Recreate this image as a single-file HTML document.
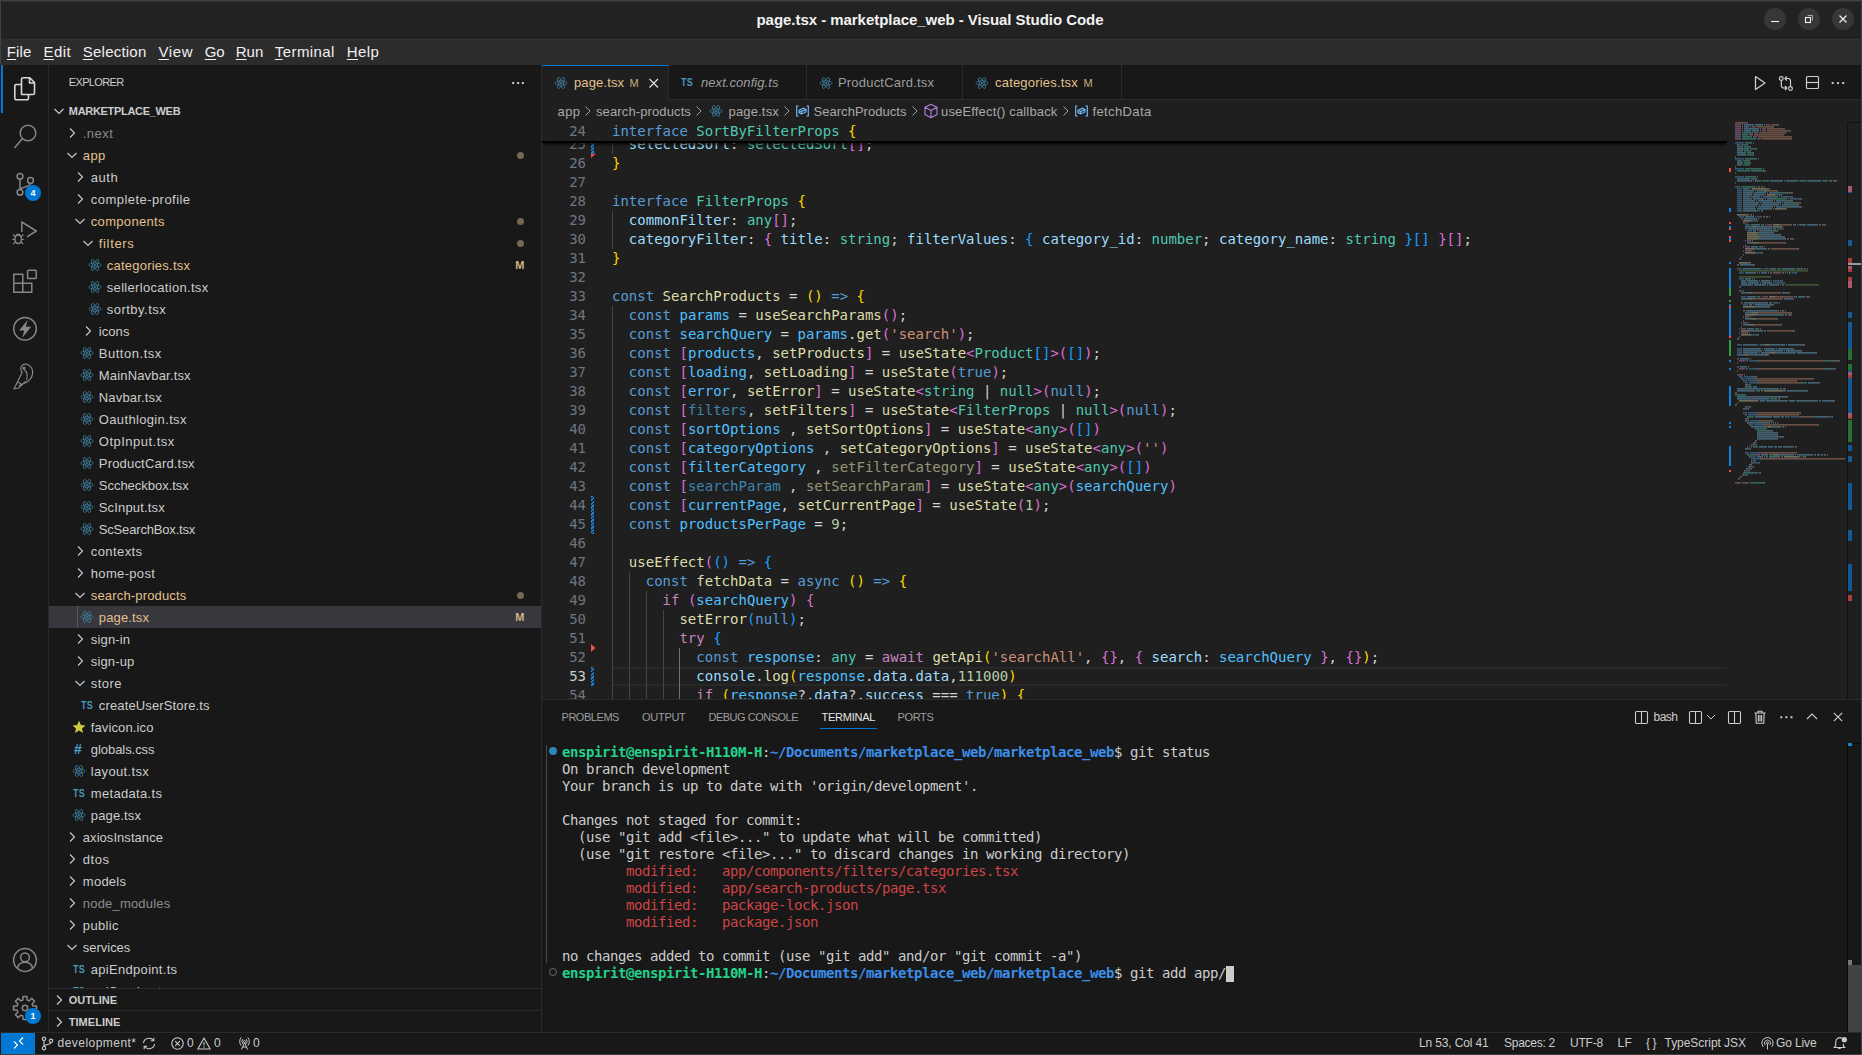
<!DOCTYPE html>
<html lang="en"><head><meta charset="utf-8"><title>page.tsx - marketplace_web - Visual Studio Code</title>
<style>
*{box-sizing:border-box;margin:0;padding:0}
html,body{width:1862px;height:1055px;overflow:hidden;background:#181818}
body{font-family:"Liberation Sans",sans-serif;color:#ccc;position:relative;font-size:13px;-webkit-font-smoothing:antialiased}
.abs{position:absolute}
#titlebar{left:0;top:0;width:1862px;height:38px;background:linear-gradient(#424242 0 1px,#2c2c2c 1px 2px,#222222 2px);border-bottom:1px solid #191919}
#title{top:10.5px;font-weight:bold;font-size:15px;color:#f2f2f2;line-height:17px;white-space:nowrap}
.wbtn{width:22px;height:22px;border-radius:11px;background:#373737;top:8px}
#menubar{left:0;top:38px;width:1862px;height:27px;background:#2c2c2c}
#menubar span{position:absolute;top:5px;font-size:15px;line-height:17px;color:#f0f0f0;white-space:nowrap;letter-spacing:.12px}
#menubar u{text-decoration-thickness:1px;text-underline-offset:2px}
#leftedge{left:0;top:0;width:1px;height:1055px;background:#424242}
#activity{left:0;top:65px;width:49px;height:967px;background:#181818;border-right:1px solid #2b2b2b}
#sidebar{left:49px;top:65px;width:493px;height:967px;background:#181818;border-right:1px solid #2b2b2b;overflow:hidden}
.row{position:absolute;left:0;width:492px;height:22px;line-height:22px;font-size:13px;color:#ccc;white-space:nowrap}
.row .t{position:absolute;top:1px;letter-spacing:.25px}
.row .ic{position:absolute;top:3px;width:16px;height:16px}
.row .chev{position:absolute;top:3px;width:16px;height:16px}
.row .badge{position:absolute;right:16.5px;top:0;font-size:11px;font-weight:bold;color:#d3b485;letter-spacing:.2px}
.row .dot{position:absolute;left:467.5px;top:7.5px;width:7px;height:7px;border-radius:4px;background:#776751}
.mod{color:#e2c08d}
.dim{color:#8c8c8c}
#editor{left:542px;top:65px;width:1320px;height:634px;background:#1f1f1f;overflow:hidden}
#tabs{left:0;top:0;width:1320px;height:35px;background:#181818;border-bottom:1px solid #2b2b2b}
.tab{position:absolute;top:0;height:35px;border-right:1px solid #2b2b2b;font-size:13px;line-height:35px;color:#9d9d9d;white-space:nowrap}
.tab.active{background:#1f1f1f;border-top:1px solid #0078d4;height:36px;color:#e2c08d}
.tab span{position:absolute;top:0}
#crumbs{left:0;top:35px;width:1320px;height:22px;font-size:13px;line-height:22px;color:#a9a9a9;white-space:nowrap}
#crumbs span{position:absolute;top:1px}
.code{font-family:"DejaVu Sans Mono",monospace;font-size:14px;line-height:19px;white-space:pre;color:#d4d4d4}
.ln{position:absolute;left:0;width:44px;text-align:right;color:#6e7681;height:19px}
.cl{position:absolute;left:70px;height:19px}
.k{color:#569cd6}.c{color:#c586c0}.ty{color:#4ec9b0}.v{color:#9cdcfe}.cn{color:#4fc1ff}.f{color:#dcdcaa}.s{color:#ce9178}.n{color:#b5cea8}
.b1{color:#ffd700}.b2{color:#da70d6}.b3{color:#179fff}
.u{opacity:.62}
.guide{position:absolute;width:1px;background:#404040}
#panel{left:542px;top:699px;width:1320px;height:333px;background:#181818;border-top:1px solid #2b2b2b}
.ptab{position:absolute;top:9px;font-size:11px;line-height:16px;color:#9d9d9d;white-space:nowrap}
.term{font-family:"DejaVu Sans Mono",monospace;font-size:14px;line-height:17px;white-space:pre;color:#cccccc;letter-spacing:-0.43px;position:absolute;left:20px;height:17px}
.tg{color:#23d18b;font-weight:bold}.tb{color:#3b8eea;font-weight:bold}.tr{color:#cd4545}
#status{left:0;top:1032px;width:1862px;height:23px;background:#181818;border-top:1px solid #2b2b2b;font-size:12px;line-height:22px;color:#ccc;white-space:nowrap}
#status span{position:absolute;top:-1px}
svg{display:block;overflow:visible}
</style></head><body>
<div class="abs" id="titlebar"></div>
<div class="abs" id="title" style="left:756.5px;letter-spacing:-0.043px">page.tsx - marketplace_web - Visual Studio Code</div>
<div class="abs wbtn" style="left:1764px"></div>
<div class="abs wbtn" style="left:1798px"></div>
<div class="abs wbtn" style="left:1832px"></div>
<svg class="abs" style="left:0;top:0" width="1862" height="38" viewBox="0 0 1862 38"><g fill="none" stroke="#f0f0f0" stroke-width="1.1"><path d="M1771 21.5 H1779"/><rect x="1805.5" y="17.5" width="5" height="5"/><path d="M1807.5 15.5 H1812.5 V20.5" stroke="#aaa" stroke-width="1"/><path d="M1839.5 15.5 L1846.5 22.5 M1846.5 15.5 L1839.5 22.5" stroke-width="1.2"/></g></svg>
<div class="abs" id="menubar">
<span style="left:6.8px;letter-spacing:0.132px"><u>F</u>ile</span>
<span style="left:43.5px;letter-spacing:0.46px"><u>E</u>dit</span>
<span style="left:82.8px;letter-spacing:0.22px"><u>S</u>election</span>
<span style="left:158.5px;letter-spacing:0.612px"><u>V</u>iew</span>
<span style="left:204.8px;letter-spacing:-0.308px"><u>G</u>o</span>
<span style="left:235.8px;letter-spacing:-0.044px"><u>R</u>un</span>
<span style="left:274.8px;letter-spacing:0.414px"><u>T</u>erminal</span>
<span style="left:346.8px;letter-spacing:0.385px"><u>H</u>elp</span>
</div>
<div class="abs" id="leftedge"></div>
<div class="abs" id="activity">
<div class="abs" style="left:1px;top:0;width:2px;height:48px;background:#0078d4"></div>
<svg class="abs" style="left:0;top:0" width="49" height="967" viewBox="0 65 49 967"><g fill="none" stroke="#d7d7d7" stroke-width="1.6" stroke-linejoin="round"><path d="M21.5 94.5 V79.3 a1.5 1.5 0 0 1 1.5 -1.5 H29.8 L34.5 82.5 V93 a1.5 1.5 0 0 1 -1.5 1.5 Z M29.5 78 V83 H34.5"/><path d="M21.5 84.5 H16.3 a1.5 1.5 0 0 0 -1.5 1.5 V98.3 a1.5 1.5 0 0 0 1.5 1.5 H27 a1.5 1.5 0 0 0 1.5 -1.5 V94.5"/></g></svg>
<svg class="abs" style="left:0;top:0" width="49" height="967" viewBox="0 65 49 967"><g fill="none" stroke="#868686" stroke-width="1.5" stroke-linejoin="round"><circle cx="28" cy="133" r="7.8"/><path d="M22.3 138.7 L14.5 148"/></g></svg>
<svg class="abs" style="left:0;top:0" width="49" height="967" viewBox="0 65 49 967"><g fill="none" stroke="#868686" stroke-width="1.5" stroke-linejoin="round"><circle cx="20" cy="176.3" r="2.9"/><circle cx="20" cy="192.3" r="2.9"/><circle cx="30.5" cy="180.5" r="2.9"/><path d="M20 179.2 V189.4 M30.5 183.4 C30.5 187 22 186.5 20 189.4"/></g></svg>
<div class="abs" style="left:25px;top:120px;width:16px;height:16px;border-radius:8px;background:#0078d4;color:#fff;font-size:9px;font-weight:bold;text-align:center;line-height:16px">4</div>
<svg class="abs" style="left:0;top:0" width="49" height="967" viewBox="0 65 49 967"><g fill="none" stroke="#868686" stroke-width="1.5" stroke-linejoin="round"><path d="M21.8 232 V222 L36.3 231 L27 236.8"/><ellipse cx="18.2" cy="239.2" rx="3.3" ry="4.2"/><path d="M15.2 236.5 L13 234.5 M21.2 236.5 L23.4 234.5 M14.9 239.5 H12.2 M21.5 239.5 H24.2 M15.4 242 L13.2 244 M21 242 L23.2 244 M16 235.8 A2.3 2.3 0 0 1 20.4 235.8" stroke-width="1.2"/></g></svg>
<svg class="abs" style="left:0;top:0" width="49" height="967" viewBox="0 65 49 967"><g fill="none" stroke="#868686" stroke-width="1.5" stroke-linejoin="round"><path d="M13.8 274.3 H22.8 V292.3 H13.8 Z M13.8 283.3 H31.8 V292.3 H22.8 M22.8 283.3"/><rect x="27.6" y="270.2" width="8.6" height="8.4" rx="0.8"/></g></svg>
<svg class="abs" style="left:0;top:0" width="49" height="967" viewBox="0 65 49 967"><g fill="none" stroke="#868686" stroke-width="1.5" stroke-linejoin="round"><circle cx="25" cy="328.8" r="11.3"/></g></svg>
<svg class="abs" style="left:0;top:0" width="49" height="967" viewBox="0 65 49 967"><path d="M27.8 319.8 L19 330.6 H24.2 L22.2 338 L31.2 326.8 H25.8 Z" fill="#868686"/></svg>
<svg class="abs" style="left:0;top:0" width="49" height="967" viewBox="0 65 49 967"><g fill="none" stroke="#868686" stroke-width="1.5" stroke-linejoin="round"><path d="M22 372.5 C18.5 366 24 362.5 28.5 365 C34.5 368.5 34.5 378.5 25 383 L19 385.5 M23.5 369 C26.5 371 28 375 26.5 380 M22.5 371.5 L14 389 L18.5 388 L25.5 381.5 M17.5 382 L22.5 384.5" stroke-width="1.2"/><circle cx="24" cy="368" r="0.8" fill="#868686"/></g></svg>
<svg class="abs" style="left:0;top:0" width="49" height="967" viewBox="0 65 49 967"><g fill="none" stroke="#868686" stroke-width="1.5" stroke-linejoin="round"><circle cx="25" cy="960" r="11.4"/><circle cx="25" cy="957.3" r="4.4"/><path d="M17.3 968.2 A8 8 0 0 1 32.7 968.2"/></g></svg>
<svg class="abs" style="left:0;top:0" width="49" height="967" viewBox="0 65 49 967"><g fill="none" stroke="#868686" stroke-width="1.5" stroke-linejoin="round"><path d="M22.9 1000.1 L23.0 996.5 L27.0 996.5 L27.1 1000.1 L29.1 1000.9 L31.8 998.4 L34.6 1001.2 L32.1 1003.9 L32.9 1005.9 L36.5 1006.0 L36.5 1010.0 L32.9 1010.1 L32.1 1012.1 L34.6 1014.8 L31.8 1017.6 L29.1 1015.1 L27.1 1015.9 L27.0 1019.5 L23.0 1019.5 L22.9 1015.9 L20.9 1015.1 L18.2 1017.6 L15.4 1014.8 L17.9 1012.1 L17.1 1010.1 L13.5 1010.0 L13.5 1006.0 L17.1 1005.9 L17.9 1003.9 L15.4 1001.2 L18.2 998.4 L20.9 1000.9 Z"/><circle cx="25" cy="1008" r="2.7"/></g></svg>
<div class="abs" style="left:25px;top:943px;width:16px;height:16px;border-radius:8px;background:#0078d4;color:#fff;font-size:9px;font-weight:bold;text-align:center;line-height:16px">1</div>
</div>
<div class="abs" id="sidebar">
<div class="abs" style="left:19.8px;top:9px;font-size:11px;line-height:16px;color:#ccc;letter-spacing:-0.653px">EXPLORER</div>
<div class="abs" style="left:462px;top:17px;width:14px;height:3px"><svg width="14" height="3" viewBox="0 0 14 3"><g fill="#d0d0d0"><rect x="1.1" y="0" width="2" height="2" rx=".5"/><rect x="6.1" y="0" width="2" height="2" rx=".5"/><rect x="10.9" y="0" width="2" height="2" rx=".5"/></g></svg></div>
<div class="row" style="top:35px"><svg class="chev" style="left:2px" viewBox="0 0 16 16"><path d="M3.5 6 L8 10.5 L12.5 6" fill="none" stroke="#c8c8c8" stroke-width="1.15"/></svg><span class="t" style="left:19.8px;top:0;font-size:11px;font-weight:bold;color:#ccc;letter-spacing:-0.308px">MARKETPLACE_WEB</span></div>
<div class="row" style="top:57px"><svg class="chev" style="left:15px" viewBox="0 0 16 16"><path d="M6 3.5 L10.5 8 L6 12.5" fill="none" stroke="#c8c8c8" stroke-width="1.15"/></svg><span class="t dim" style="left:33.8px;letter-spacing:0.443px">.next</span></div>
<div class="row" style="top:79px"><svg class="chev" style="left:15px" viewBox="0 0 16 16"><path d="M3.5 6 L8 10.5 L12.5 6" fill="none" stroke="#c8c8c8" stroke-width="1.15"/></svg><span class="t mod" style="left:33.8px;letter-spacing:0.432px">app</span><span class="dot"></span></div>
<div class="row" style="top:101px"><svg class="chev" style="left:23px" viewBox="0 0 16 16"><path d="M6 3.5 L10.5 8 L6 12.5" fill="none" stroke="#c8c8c8" stroke-width="1.15"/></svg><span class="t" style="left:41.8px;letter-spacing:0.522px">auth</span></div>
<div class="row" style="top:123px"><svg class="chev" style="left:23px" viewBox="0 0 16 16"><path d="M6 3.5 L10.5 8 L6 12.5" fill="none" stroke="#c8c8c8" stroke-width="1.15"/></svg><span class="t" style="left:41.8px;letter-spacing:0.45px">complete-profile</span></div>
<div class="row" style="top:145px"><svg class="chev" style="left:23px" viewBox="0 0 16 16"><path d="M3.5 6 L8 10.5 L12.5 6" fill="none" stroke="#c8c8c8" stroke-width="1.15"/></svg><span class="t mod" style="left:41.8px;letter-spacing:0.317px">components</span><span class="dot"></span></div>
<div class="row" style="top:167px"><svg class="chev" style="left:31px" viewBox="0 0 16 16"><path d="M3.5 6 L8 10.5 L12.5 6" fill="none" stroke="#c8c8c8" stroke-width="1.15"/></svg><span class="t mod" style="left:49.8px;letter-spacing:0.663px">filters</span><span class="dot"></span></div>
<div class="row" style="top:189px"><svg class="ic" style="left:37.5px;top:3.3px;width:16px;height:16px" viewBox="0 0 16 16"><g fill="none" stroke="#3c7c99" stroke-width="0.8"><ellipse cx="8" cy="8" rx="6.1" ry="2.2"/><ellipse cx="8" cy="8" rx="6.1" ry="2.2" transform="rotate(60 8 8)"/><ellipse cx="8" cy="8" rx="6.1" ry="2.2" transform="rotate(120 8 8)"/></g><circle cx="8" cy="8" r="1.1" fill="#3c7c99"/></svg><span class="t mod" style="left:57.8px;letter-spacing:0.228px">categories.tsx</span><span class="badge">M</span></div>
<div class="row" style="top:211px"><svg class="ic" style="left:37.5px;top:3.3px;width:16px;height:16px" viewBox="0 0 16 16"><g fill="none" stroke="#3c7c99" stroke-width="0.8"><ellipse cx="8" cy="8" rx="6.1" ry="2.2"/><ellipse cx="8" cy="8" rx="6.1" ry="2.2" transform="rotate(60 8 8)"/><ellipse cx="8" cy="8" rx="6.1" ry="2.2" transform="rotate(120 8 8)"/></g><circle cx="8" cy="8" r="1.1" fill="#3c7c99"/></svg><span class="t" style="left:57.8px;letter-spacing:0.311px">sellerlocation.tsx</span></div>
<div class="row" style="top:233px"><svg class="ic" style="left:37.5px;top:3.3px;width:16px;height:16px" viewBox="0 0 16 16"><g fill="none" stroke="#3c7c99" stroke-width="0.8"><ellipse cx="8" cy="8" rx="6.1" ry="2.2"/><ellipse cx="8" cy="8" rx="6.1" ry="2.2" transform="rotate(60 8 8)"/><ellipse cx="8" cy="8" rx="6.1" ry="2.2" transform="rotate(120 8 8)"/></g><circle cx="8" cy="8" r="1.1" fill="#3c7c99"/></svg><span class="t" style="left:57.8px;letter-spacing:0.473px">sortby.tsx</span></div>
<div class="row" style="top:255px"><svg class="chev" style="left:31px" viewBox="0 0 16 16"><path d="M6 3.5 L10.5 8 L6 12.5" fill="none" stroke="#c8c8c8" stroke-width="1.15"/></svg><span class="t" style="left:49.8px;letter-spacing:0.068px">icons</span></div>
<div class="row" style="top:277px"><svg class="ic" style="left:29.5px;top:3.3px;width:16px;height:16px" viewBox="0 0 16 16"><g fill="none" stroke="#3c7c99" stroke-width="0.8"><ellipse cx="8" cy="8" rx="6.1" ry="2.2"/><ellipse cx="8" cy="8" rx="6.1" ry="2.2" transform="rotate(60 8 8)"/><ellipse cx="8" cy="8" rx="6.1" ry="2.2" transform="rotate(120 8 8)"/></g><circle cx="8" cy="8" r="1.1" fill="#3c7c99"/></svg><span class="t" style="left:49.8px;letter-spacing:0.519px">Button.tsx</span></div>
<div class="row" style="top:299px"><svg class="ic" style="left:29.5px;top:3.3px;width:16px;height:16px" viewBox="0 0 16 16"><g fill="none" stroke="#3c7c99" stroke-width="0.8"><ellipse cx="8" cy="8" rx="6.1" ry="2.2"/><ellipse cx="8" cy="8" rx="6.1" ry="2.2" transform="rotate(60 8 8)"/><ellipse cx="8" cy="8" rx="6.1" ry="2.2" transform="rotate(120 8 8)"/></g><circle cx="8" cy="8" r="1.1" fill="#3c7c99"/></svg><span class="t" style="left:49.8px;letter-spacing:0.172px">MainNavbar.tsx</span></div>
<div class="row" style="top:321px"><svg class="ic" style="left:29.5px;top:3.3px;width:16px;height:16px" viewBox="0 0 16 16"><g fill="none" stroke="#3c7c99" stroke-width="0.8"><ellipse cx="8" cy="8" rx="6.1" ry="2.2"/><ellipse cx="8" cy="8" rx="6.1" ry="2.2" transform="rotate(60 8 8)"/><ellipse cx="8" cy="8" rx="6.1" ry="2.2" transform="rotate(120 8 8)"/></g><circle cx="8" cy="8" r="1.1" fill="#3c7c99"/></svg><span class="t" style="left:49.8px;letter-spacing:0.158px">Navbar.tsx</span></div>
<div class="row" style="top:343px"><svg class="ic" style="left:29.5px;top:3.3px;width:16px;height:16px" viewBox="0 0 16 16"><g fill="none" stroke="#3c7c99" stroke-width="0.8"><ellipse cx="8" cy="8" rx="6.1" ry="2.2"/><ellipse cx="8" cy="8" rx="6.1" ry="2.2" transform="rotate(60 8 8)"/><ellipse cx="8" cy="8" rx="6.1" ry="2.2" transform="rotate(120 8 8)"/></g><circle cx="8" cy="8" r="1.1" fill="#3c7c99"/></svg><span class="t" style="left:49.8px;letter-spacing:0.349px">Oauthlogin.tsx</span></div>
<div class="row" style="top:365px"><svg class="ic" style="left:29.5px;top:3.3px;width:16px;height:16px" viewBox="0 0 16 16"><g fill="none" stroke="#3c7c99" stroke-width="0.8"><ellipse cx="8" cy="8" rx="6.1" ry="2.2"/><ellipse cx="8" cy="8" rx="6.1" ry="2.2" transform="rotate(60 8 8)"/><ellipse cx="8" cy="8" rx="6.1" ry="2.2" transform="rotate(120 8 8)"/></g><circle cx="8" cy="8" r="1.1" fill="#3c7c99"/></svg><span class="t" style="left:49.8px;letter-spacing:0.492px">OtpInput.tsx</span></div>
<div class="row" style="top:387px"><svg class="ic" style="left:29.5px;top:3.3px;width:16px;height:16px" viewBox="0 0 16 16"><g fill="none" stroke="#3c7c99" stroke-width="0.8"><ellipse cx="8" cy="8" rx="6.1" ry="2.2"/><ellipse cx="8" cy="8" rx="6.1" ry="2.2" transform="rotate(60 8 8)"/><ellipse cx="8" cy="8" rx="6.1" ry="2.2" transform="rotate(120 8 8)"/></g><circle cx="8" cy="8" r="1.1" fill="#3c7c99"/></svg><span class="t" style="left:49.8px;letter-spacing:0.186px">ProductCard.tsx</span></div>
<div class="row" style="top:409px"><svg class="ic" style="left:29.5px;top:3.3px;width:16px;height:16px" viewBox="0 0 16 16"><g fill="none" stroke="#3c7c99" stroke-width="0.8"><ellipse cx="8" cy="8" rx="6.1" ry="2.2"/><ellipse cx="8" cy="8" rx="6.1" ry="2.2" transform="rotate(60 8 8)"/><ellipse cx="8" cy="8" rx="6.1" ry="2.2" transform="rotate(120 8 8)"/></g><circle cx="8" cy="8" r="1.1" fill="#3c7c99"/></svg><span class="t" style="left:49.8px;letter-spacing:-0.023px">Sccheckbox.tsx</span></div>
<div class="row" style="top:431px"><svg class="ic" style="left:29.5px;top:3.3px;width:16px;height:16px" viewBox="0 0 16 16"><g fill="none" stroke="#3c7c99" stroke-width="0.8"><ellipse cx="8" cy="8" rx="6.1" ry="2.2"/><ellipse cx="8" cy="8" rx="6.1" ry="2.2" transform="rotate(60 8 8)"/><ellipse cx="8" cy="8" rx="6.1" ry="2.2" transform="rotate(120 8 8)"/></g><circle cx="8" cy="8" r="1.1" fill="#3c7c99"/></svg><span class="t" style="left:49.8px;letter-spacing:0.153px">ScInput.tsx</span></div>
<div class="row" style="top:453px"><svg class="ic" style="left:29.5px;top:3.3px;width:16px;height:16px" viewBox="0 0 16 16"><g fill="none" stroke="#3c7c99" stroke-width="0.8"><ellipse cx="8" cy="8" rx="6.1" ry="2.2"/><ellipse cx="8" cy="8" rx="6.1" ry="2.2" transform="rotate(60 8 8)"/><ellipse cx="8" cy="8" rx="6.1" ry="2.2" transform="rotate(120 8 8)"/></g><circle cx="8" cy="8" r="1.1" fill="#3c7c99"/></svg><span class="t" style="left:49.8px;letter-spacing:-0.173px">ScSearchBox.tsx</span></div>
<div class="row" style="top:475px"><svg class="chev" style="left:23px" viewBox="0 0 16 16"><path d="M6 3.5 L10.5 8 L6 12.5" fill="none" stroke="#c8c8c8" stroke-width="1.15"/></svg><span class="t" style="left:41.8px;letter-spacing:0.41px">contexts</span></div>
<div class="row" style="top:497px"><svg class="chev" style="left:23px" viewBox="0 0 16 16"><path d="M6 3.5 L10.5 8 L6 12.5" fill="none" stroke="#c8c8c8" stroke-width="1.15"/></svg><span class="t" style="left:41.8px;letter-spacing:0.331px">home-post</span></div>
<div class="row" style="top:519px"><svg class="chev" style="left:23px" viewBox="0 0 16 16"><path d="M3.5 6 L8 10.5 L12.5 6" fill="none" stroke="#c8c8c8" stroke-width="1.15"/></svg><span class="t mod" style="left:41.8px;letter-spacing:0.165px">search-products</span><span class="dot"></span></div>
<div class="row" style="top:541px;background:#37373d"><div class="abs" style="left:28px;top:0;width:1px;height:22px;background:#5a5a5a"></div><svg class="ic" style="left:29.5px;top:3.3px;width:16px;height:16px" viewBox="0 0 16 16"><g fill="none" stroke="#3c7c99" stroke-width="0.8"><ellipse cx="8" cy="8" rx="6.1" ry="2.2"/><ellipse cx="8" cy="8" rx="6.1" ry="2.2" transform="rotate(60 8 8)"/><ellipse cx="8" cy="8" rx="6.1" ry="2.2" transform="rotate(120 8 8)"/></g><circle cx="8" cy="8" r="1.1" fill="#3c7c99"/></svg><span class="t mod" style="left:49.8px;letter-spacing:0.155px">page.tsx</span><span class="badge">M</span></div>
<div class="row" style="top:563px"><svg class="chev" style="left:23px" viewBox="0 0 16 16"><path d="M6 3.5 L10.5 8 L6 12.5" fill="none" stroke="#c8c8c8" stroke-width="1.15"/></svg><span class="t" style="left:41.8px;letter-spacing:0.158px">sign-in</span></div>
<div class="row" style="top:585px"><svg class="chev" style="left:23px" viewBox="0 0 16 16"><path d="M6 3.5 L10.5 8 L6 12.5" fill="none" stroke="#c8c8c8" stroke-width="1.15"/></svg><span class="t" style="left:41.8px;letter-spacing:0.151px">sign-up</span></div>
<div class="row" style="top:607px"><svg class="chev" style="left:23px" viewBox="0 0 16 16"><path d="M3.5 6 L8 10.5 L12.5 6" fill="none" stroke="#c8c8c8" stroke-width="1.15"/></svg><span class="t" style="left:41.8px;letter-spacing:0.419px">store</span></div>
<div class="row" style="top:629px"><span style="position:absolute;left:32px;top:0.5px;font-size:10px;font-weight:bold;color:#4a96b8;letter-spacing:.2px;transform:scaleX(.9);transform-origin:0 0">TS</span><span class="t" style="left:49.8px;letter-spacing:0.14px">createUserStore.ts</span></div>
<div class="row" style="top:651px"><svg class="ic" style="left:23px;top:4px;width:14px;height:14px" viewBox="0 0 14 14"><path d="M7 0.8 L8.9 5 L13.4 5.4 L10 8.5 L11 13 L7 10.6 L3 13 L4 8.5 L0.6 5.4 L5.1 5 Z" fill="#cbcb41"/></svg><span class="t" style="left:41.8px;letter-spacing:0.116px">favicon.ico</span></div>
<div class="row" style="top:673px"><span style="position:absolute;left:25px;top:0;font-size:14px;font-weight:bold;color:#4d9ec0">#</span><span class="t" style="left:41.8px;letter-spacing:-0.056px">globals.css</span></div>
<div class="row" style="top:695px"><svg class="ic" style="left:21.5px;top:3.3px;width:16px;height:16px" viewBox="0 0 16 16"><g fill="none" stroke="#3c7c99" stroke-width="0.8"><ellipse cx="8" cy="8" rx="6.1" ry="2.2"/><ellipse cx="8" cy="8" rx="6.1" ry="2.2" transform="rotate(60 8 8)"/><ellipse cx="8" cy="8" rx="6.1" ry="2.2" transform="rotate(120 8 8)"/></g><circle cx="8" cy="8" r="1.1" fill="#3c7c99"/></svg><span class="t" style="left:41.8px;letter-spacing:0.348px">layout.tsx</span></div>
<div class="row" style="top:717px"><span style="position:absolute;left:24px;top:0.5px;font-size:10px;font-weight:bold;color:#4a96b8;letter-spacing:.2px;transform:scaleX(.9);transform-origin:0 0">TS</span><span class="t" style="left:41.8px;letter-spacing:0.324px">metadata.ts</span></div>
<div class="row" style="top:739px"><svg class="ic" style="left:21.5px;top:3.3px;width:16px;height:16px" viewBox="0 0 16 16"><g fill="none" stroke="#3c7c99" stroke-width="0.8"><ellipse cx="8" cy="8" rx="6.1" ry="2.2"/><ellipse cx="8" cy="8" rx="6.1" ry="2.2" transform="rotate(60 8 8)"/><ellipse cx="8" cy="8" rx="6.1" ry="2.2" transform="rotate(120 8 8)"/></g><circle cx="8" cy="8" r="1.1" fill="#3c7c99"/></svg><span class="t" style="left:41.8px;letter-spacing:0.155px">page.tsx</span></div>
<div class="row" style="top:761px"><svg class="chev" style="left:15px" viewBox="0 0 16 16"><path d="M6 3.5 L10.5 8 L6 12.5" fill="none" stroke="#c8c8c8" stroke-width="1.15"/></svg><span class="t" style="left:33.8px;letter-spacing:0.054px">axiosInstance</span></div>
<div class="row" style="top:783px"><svg class="chev" style="left:15px" viewBox="0 0 16 16"><path d="M6 3.5 L10.5 8 L6 12.5" fill="none" stroke="#c8c8c8" stroke-width="1.15"/></svg><span class="t" style="left:33.8px;letter-spacing:0.53px">dtos</span></div>
<div class="row" style="top:805px"><svg class="chev" style="left:15px" viewBox="0 0 16 16"><path d="M6 3.5 L10.5 8 L6 12.5" fill="none" stroke="#c8c8c8" stroke-width="1.15"/></svg><span class="t" style="left:33.8px;letter-spacing:0.263px">models</span></div>
<div class="row" style="top:827px"><svg class="chev" style="left:15px" viewBox="0 0 16 16"><path d="M6 3.5 L10.5 8 L6 12.5" fill="none" stroke="#c8c8c8" stroke-width="1.15"/></svg><span class="t dim" style="left:33.8px;letter-spacing:0.192px">node_modules</span></div>
<div class="row" style="top:849px"><svg class="chev" style="left:15px" viewBox="0 0 16 16"><path d="M6 3.5 L10.5 8 L6 12.5" fill="none" stroke="#c8c8c8" stroke-width="1.15"/></svg><span class="t" style="left:33.8px;letter-spacing:0.355px">public</span></div>
<div class="row" style="top:871px"><svg class="chev" style="left:15px" viewBox="0 0 16 16"><path d="M3.5 6 L8 10.5 L12.5 6" fill="none" stroke="#c8c8c8" stroke-width="1.15"/></svg><span class="t" style="left:33.8px;letter-spacing:-0.023px">services</span></div>
<div class="row" style="top:893px"><span style="position:absolute;left:24px;top:0.5px;font-size:10px;font-weight:bold;color:#4a96b8;letter-spacing:.2px;transform:scaleX(.9);transform-origin:0 0">TS</span><span class="t" style="left:41.8px;letter-spacing:0.3px">apiEndpoint.ts</span></div>
<div class="row" style="top:915px"><span style="position:absolute;left:24px;top:0.5px;font-size:10px;font-weight:bold;color:#4a96b8;letter-spacing:.2px;transform:scaleX(.9);transform-origin:0 0">TS</span><span class="t" style="left:41.8px;letter-spacing:0.252px">apiService.ts</span></div>
<div class="row" style="top:923px;background:#181818;border-top:1px solid #2b2b2b"><svg class="chev" style="left:2px" viewBox="0 0 16 16"><path d="M6 3.5 L10.5 8 L6 12.5" fill="none" stroke="#c8c8c8" stroke-width="1.15"/></svg><span class="t" style="left:19.7px;top:0;font-size:11px;font-weight:bold;letter-spacing:0.031px">OUTLINE</span></div>
<div class="row" style="top:945px;background:#181818;border-top:1px solid #2b2b2b"><svg class="chev" style="left:2px" viewBox="0 0 16 16"><path d="M6 3.5 L10.5 8 L6 12.5" fill="none" stroke="#c8c8c8" stroke-width="1.15"/></svg><span class="t" style="left:19.7px;top:0;font-size:11px;font-weight:bold;letter-spacing:0.057px">TIMELINE</span></div>
</div>
<div class="abs" id="editor">
<div class="abs code" id="code" style="left:0;top:0;width:1320px;height:635px">
<div class="abs" style="left:71px;top:602px;width:1114px;height:19px;border-top:2px solid #282828;border-bottom:2px solid #282828"></div>
<div class="guide" style="left:70px;top:70px;height:19px;background:#444444"></div>
<div class="guide" style="left:70px;top:146px;height:38px;background:#444444"></div>
<div class="guide" style="left:70px;top:241px;height:399px;background:#444444"></div>
<div class="guide" style="left:87px;top:507px;height:133px;background:#444444"></div>
<div class="guide" style="left:104px;top:526px;height:114px;background:#444444"></div>
<div class="guide" style="left:121px;top:545px;height:95px;background:#444444"></div>
<div class="guide" style="left:137px;top:583px;height:57px;background:#707070"></div>
<div class="ln" style="top:70px;color:#6e7681">25</div><div class="cl" style="top:70px">  <span class="v">selectedSort</span>: <span class="ty">selectedSort</span><span class="b2">[]</span>;</div>
<div class="ln" style="top:89px;color:#6e7681">26</div><div class="cl" style="top:89px"><span class="b1">}</span></div>
<div class="ln" style="top:108px;color:#6e7681">27</div><div class="cl" style="top:108px"></div>
<div class="ln" style="top:127px;color:#6e7681">28</div><div class="cl" style="top:127px"><span class="k">interface</span> <span class="ty">FilterProps</span> <span class="b1">{</span></div>
<div class="ln" style="top:146px;color:#6e7681">29</div><div class="cl" style="top:146px">  <span class="v">commonFilter</span>: <span class="ty">any</span><span class="b2">[]</span>;</div>
<div class="ln" style="top:165px;color:#6e7681">30</div><div class="cl" style="top:165px">  <span class="v">categoryFilter</span>: <span class="b2">{</span> <span class="v">title</span>: <span class="ty">string</span>; <span class="v">filterValues</span>: <span class="b3">{</span> <span class="v">category_id</span>: <span class="ty">number</span>; <span class="v">category_name</span>: <span class="ty">string</span> <span class="b3">}[]</span> <span class="b2">}[]</span>;</div>
<div class="ln" style="top:184px;color:#6e7681">31</div><div class="cl" style="top:184px"><span class="b1">}</span></div>
<div class="ln" style="top:203px;color:#6e7681">32</div><div class="cl" style="top:203px"></div>
<div class="ln" style="top:222px;color:#6e7681">33</div><div class="cl" style="top:222px"><span class="k">const</span> <span class="f">SearchProducts</span> = <span class="b1">()</span> <span class="k">=&gt;</span> <span class="b1">{</span></div>
<div class="ln" style="top:241px;color:#6e7681">34</div><div class="cl" style="top:241px">  <span class="k">const</span> <span class="cn">params</span> = <span class="f">useSearchParams</span><span class="b2">()</span>;</div>
<div class="ln" style="top:260px;color:#6e7681">35</div><div class="cl" style="top:260px">  <span class="k">const</span> <span class="cn">searchQuery</span> = <span class="cn">params</span>.<span class="f">get</span><span class="b2">(</span><span class="s">&#x27;search&#x27;</span><span class="b2">)</span>;</div>
<div class="ln" style="top:279px;color:#6e7681">36</div><div class="cl" style="top:279px">  <span class="k">const</span> <span class="b2">[</span><span class="cn">products</span>, <span class="f">setProducts</span><span class="b2">]</span> = <span class="f">useState</span><span class="b2">&lt;</span><span class="ty">Product</span><span class="b3">[]</span><span class="b2">&gt;(</span><span class="b3">[]</span><span class="b2">)</span>;</div>
<div class="ln" style="top:298px;color:#6e7681">37</div><div class="cl" style="top:298px">  <span class="k">const</span> <span class="b2">[</span><span class="cn">loading</span>, <span class="f">setLoading</span><span class="b2">]</span> = <span class="f">useState</span><span class="b2">(</span><span class="k">true</span><span class="b2">)</span>;</div>
<div class="ln" style="top:317px;color:#6e7681">38</div><div class="cl" style="top:317px">  <span class="k">const</span> <span class="b2">[</span><span class="cn">error</span>, <span class="f">setError</span><span class="b2">]</span> = <span class="f">useState</span><span class="b2">&lt;</span><span class="ty">string</span> | <span class="ty">null</span><span class="b2">&gt;(</span><span class="k">null</span><span class="b2">)</span>;</div>
<div class="ln" style="top:336px;color:#6e7681">39</div><div class="cl" style="top:336px">  <span class="k">const</span> <span class="b2">[</span><span class="cn u">filters</span>, <span class="f">setFilters</span><span class="b2">]</span> = <span class="f">useState</span><span class="b2">&lt;</span><span class="ty">FilterProps</span> | <span class="ty">null</span><span class="b2">&gt;(</span><span class="k">null</span><span class="b2">)</span>;</div>
<div class="ln" style="top:355px;color:#6e7681">40</div><div class="cl" style="top:355px">  <span class="k">const</span> <span class="b2">[</span><span class="cn">sortOptions</span> , <span class="f">setSortOptions</span><span class="b2">]</span> = <span class="f">useState</span><span class="b2">&lt;</span><span class="ty">any</span><span class="b2">&gt;(</span><span class="b3">[]</span><span class="b2">)</span></div>
<div class="ln" style="top:374px;color:#6e7681">41</div><div class="cl" style="top:374px">  <span class="k">const</span> <span class="b2">[</span><span class="cn">categoryOptions</span> , <span class="f">setCategoryOptions</span><span class="b2">]</span> = <span class="f">useState</span><span class="b2">&lt;</span><span class="ty">any</span><span class="b2">&gt;(</span><span class="s">&#x27;&#x27;</span><span class="b2">)</span></div>
<div class="ln" style="top:393px;color:#6e7681">42</div><div class="cl" style="top:393px">  <span class="k">const</span> <span class="b2">[</span><span class="cn">filterCategory</span> , <span class="f u">setFilterCategory</span><span class="b2">]</span> = <span class="f">useState</span><span class="b2">&lt;</span><span class="ty">any</span><span class="b2">&gt;(</span><span class="b3">[]</span><span class="b2">)</span></div>
<div class="ln" style="top:412px;color:#6e7681">43</div><div class="cl" style="top:412px">  <span class="k">const</span> <span class="b2">[</span><span class="cn u">searchParam</span> , <span class="f u">setSearchParam</span><span class="b2">]</span> = <span class="f">useState</span><span class="b2">&lt;</span><span class="ty">any</span><span class="b2">&gt;(</span><span class="cn">searchQuery</span><span class="b2">)</span></div>
<div class="ln" style="top:431px;color:#6e7681">44</div><div class="cl" style="top:431px">  <span class="k">const</span> <span class="b2">[</span><span class="cn">currentPage</span>, <span class="f">setCurrentPage</span><span class="b2">]</span> = <span class="f">useState</span><span class="b2">(</span><span class="n">1</span><span class="b2">)</span>;</div>
<div class="ln" style="top:450px;color:#6e7681">45</div><div class="cl" style="top:450px">  <span class="k">const</span> <span class="cn">productsPerPage</span> = <span class="n">9</span>;</div>
<div class="ln" style="top:469px;color:#6e7681">46</div><div class="cl" style="top:469px"></div>
<div class="ln" style="top:488px;color:#6e7681">47</div><div class="cl" style="top:488px">  <span class="f">useEffect</span><span class="b2">(</span><span class="b3">()</span> <span class="k">=&gt;</span> <span class="b3">{</span></div>
<div class="ln" style="top:507px;color:#6e7681">48</div><div class="cl" style="top:507px">    <span class="k">const</span> <span class="f">fetchData</span> = <span class="k">async</span> <span class="b1">()</span> <span class="k">=&gt;</span> <span class="b1">{</span></div>
<div class="ln" style="top:526px;color:#6e7681">49</div><div class="cl" style="top:526px">      <span class="c">if</span> <span class="b2">(</span><span class="cn">searchQuery</span><span class="b2">)</span> <span class="b2">{</span></div>
<div class="ln" style="top:545px;color:#6e7681">50</div><div class="cl" style="top:545px">        <span class="f">setError</span><span class="b3">(</span><span class="k">null</span><span class="b3">)</span>;</div>
<div class="ln" style="top:564px;color:#6e7681">51</div><div class="cl" style="top:564px">        <span class="c">try</span> <span class="b3">{</span></div>
<div class="ln" style="top:583px;color:#6e7681">52</div><div class="cl" style="top:583px">          <span class="k">const</span> <span class="cn">response</span>: <span class="ty">any</span> = <span class="c">await</span> <span class="f">getApi</span><span class="b1">(</span><span class="s">&#x27;searchAll&#x27;</span>, <span class="b2">{}</span>, <span class="b2">{</span> <span class="v">search</span>: <span class="cn">searchQuery</span> <span class="b2">}</span>, <span class="b2">{}</span><span class="b1">)</span>;</div>
<div class="ln" style="top:602px;color:#ccc">53</div><div class="cl" style="top:602px">          <span class="v">console</span>.<span class="f">log</span><span class="b1">(</span><span class="cn">response</span>.<span class="v">data</span>.<span class="v">data</span>,<span class="n">111000</span><span class="b1">)</span></div>
<div class="ln" style="top:621px;color:#6e7681">54</div><div class="cl" style="top:621px">          <span class="c">if</span> <span class="b1">(</span><span class="cn">response</span>?.<span class="v">data</span>?.<span class="v">success</span> === <span class="k">true</span><span class="b1">)</span> <span class="b1">{</span></div>
<svg class="abs" style="left:49px;top:579px" width="5" height="8" viewBox="0 0 5 8"><path d="M0 0 L4.5 4 L0 8 Z" fill="#f14c4c"/></svg>
<svg class="abs" style="left:49px;top:85px" width="5" height="8" viewBox="0 0 5 8"><path d="M0 0 L4.5 4 L0 8 Z" fill="#f14c4c"/></svg>
<div class="abs" style="left:49px;top:431px;width:3px;height:38px;background:repeating-linear-gradient(135deg,#1b81d8 0 1.7px,#1f1f1f 1.7px 2.5px)"></div>
<div class="abs" style="left:49px;top:602px;width:3px;height:19px;background:repeating-linear-gradient(135deg,#1b81d8 0 1.7px,#1f1f1f 1.7px 2.5px)"></div>
<div class="abs" style="left:49px;top:70px;width:3px;height:19px;background:repeating-linear-gradient(135deg,#1b81d8 0 1.7px,#1f1f1f 1.7px 2.5px)"></div>
<div class="abs" style="left:0;top:57px;width:1185px;height:20.5px;background:#1f1f1f;box-shadow:0 3px 2px -1px rgba(0,0,0,.6);border-bottom:2px solid #000"><div class="ln" style="top:0">24</div><div class="cl" style="top:0"><span class="k">interface</span> <span class="ty">SortByFilterProps</span> <span class="b1">{</span></div></div>
</div>
<div class="abs" id="tabs">
<div class="tab active" style="left:0;width:127px"><svg class="abs" style="left:11px;top:9px;width:16px;height:16px" viewBox="0 0 16 16"><g fill="none" stroke="#3c7c99" stroke-width="0.8"><ellipse cx="8" cy="8" rx="6.1" ry="2.2"/><ellipse cx="8" cy="8" rx="6.1" ry="2.2" transform="rotate(60 8 8)"/><ellipse cx="8" cy="8" rx="6.1" ry="2.2" transform="rotate(120 8 8)"/></g><circle cx="8" cy="8" r="1.1" fill="#3c7c99"/></svg><span style="left:31.9px;letter-spacing:0.143px;top:-1px">page.tsx</span><span style="left:87.5px;top:0;font-size:11px;color:#c9ab7c">M</span><svg class="abs" style="left:106px;top:11px" width="12" height="12" viewBox="0 0 12 12"><path d="M1.5 2 L10 10.5 M10 2 L1.5 10.5" stroke="#e0e0e0" stroke-width="1.2" fill="none"/></svg></div>
<div class="tab" style="left:127px;width:138px"><span style="position:absolute;left:12px;top:0px;font-size:10px;font-weight:bold;color:#4a96b8;letter-spacing:.2px;transform:scaleX(.9);transform-origin:0 0">TS</span><span style="left:32.0px;letter-spacing:0.064px;font-style:italic">next.config.ts</span></div>
<div class="tab" style="left:265px;width:156px"><svg class="abs" style="left:11px;top:10px;width:16px;height:16px" viewBox="0 0 16 16"><g fill="none" stroke="#3c7c99" stroke-width="0.8"><ellipse cx="8" cy="8" rx="6.1" ry="2.2"/><ellipse cx="8" cy="8" rx="6.1" ry="2.2" transform="rotate(60 8 8)"/><ellipse cx="8" cy="8" rx="6.1" ry="2.2" transform="rotate(120 8 8)"/></g><circle cx="8" cy="8" r="1.1" fill="#3c7c99"/></svg><span style="left:30.9px;letter-spacing:0.213px">ProductCard.tsx</span></div>
<div class="tab" style="left:421px;width:159px;color:#e2c08d"><svg class="abs" style="left:11px;top:10px;width:16px;height:16px" viewBox="0 0 16 16"><g fill="none" stroke="#3c7c99" stroke-width="0.8"><ellipse cx="8" cy="8" rx="6.1" ry="2.2"/><ellipse cx="8" cy="8" rx="6.1" ry="2.2" transform="rotate(60 8 8)"/><ellipse cx="8" cy="8" rx="6.1" ry="2.2" transform="rotate(120 8 8)"/></g><circle cx="8" cy="8" r="1.1" fill="#3c7c99"/></svg><span style="left:32.0px;letter-spacing:0.2px">categories.tsx</span><span style="left:120.5px;top:1px;font-size:11px;color:#c9ab7c">M</span></div>
<svg class="abs" style="left:1210px;top:10px" width="16" height="16" viewBox="0 0 16 16"><path d="M3.5 1.5 L13 8 L3.5 14.5 Z" fill="none" stroke="#d0d0d0" stroke-width="1.25" stroke-linejoin="round"/></svg>
<svg class="abs" style="left:1236px;top:10px" width="16" height="16" viewBox="0 0 16 16"><g fill="none" stroke="#d0d0d0" stroke-width="1.15"><circle cx="3.3" cy="3.5" r="1.9"/><circle cx="12.5" cy="13.5" r="1.9"/><path d="M3.3 5.4 V10.5 a2.5 2.5 0 0 0 2.5 2.5 H8.6 M6.9 11 L8.9 13 L6.9 15"/><path d="M12.5 11.6 V6 a2.5 2.5 0 0 0 -2.5 -2.5 H7.2 M8.9 1.5 L6.9 3.5 L8.9 5.5"/></g></svg>
<svg class="abs" style="left:1262px;top:10px" width="16" height="16" viewBox="0 0 16 16"><g fill="none" stroke="#d0d0d0" stroke-width="1.15"><rect x="2.5" y="1.5" width="12" height="12" rx="1"/><path d="M2.5 7.5 H14.5"/></g></svg>
<svg class="abs" style="left:1289px;top:17px" width="14" height="3" viewBox="0 0 14 3"><g fill="#d0d0d0"><rect x="0.7" y="0" width="2" height="2" rx=".5"/><rect x="6" y="0" width="2" height="2" rx=".5"/><rect x="11.2" y="0" width="2" height="2" rx=".5"/></g></svg>
</div>
<div class="abs" id="crumbs">
<span style="left:15.5px;letter-spacing:0.432px">app</span>
<svg class="abs" style="left:42px;top:5px" width="8" height="12" viewBox="0 0 8 12"><path d="M1.5 1.5 L6 6 L1.5 10.5" fill="none" stroke="#a0a0a0" stroke-width="1"/></svg>
<span style="left:54.0px;letter-spacing:0.119px">search-products</span>
<svg class="abs" style="left:153px;top:5px" width="8" height="12" viewBox="0 0 8 12"><path d="M1.5 1.5 L6 6 L1.5 10.5" fill="none" stroke="#a0a0a0" stroke-width="1"/></svg>
<svg class="abs" style="left:166px;top:3px;width:16px;height:16px" viewBox="0 0 16 16"><g fill="none" stroke="#3c7c99" stroke-width="0.8"><ellipse cx="8" cy="8" rx="6.1" ry="2.2"/><ellipse cx="8" cy="8" rx="6.1" ry="2.2" transform="rotate(60 8 8)"/><ellipse cx="8" cy="8" rx="6.1" ry="2.2" transform="rotate(120 8 8)"/></g><circle cx="8" cy="8" r="1.1" fill="#3c7c99"/></svg>
<span style="left:186.5px;letter-spacing:0.168px">page.tsx</span>
<svg class="abs" style="left:241px;top:5px" width="8" height="12" viewBox="0 0 8 12"><path d="M1.5 1.5 L6 6 L1.5 10.5" fill="none" stroke="#a0a0a0" stroke-width="1"/></svg>
<svg class="abs" style="left:253px;top:4px" width="15" height="14" viewBox="0 0 15 14"><g fill="none" stroke="#75beff" stroke-width="1.1"><path d="M3.5 2 H1.7 V12 H3.5 M11.5 2 H13.3 V12 H11.5"/><path d="M4 6.2 L8.5 4.2 L11 5.6 L11 8 L6.5 10 L4 8.6 Z M4 6.2 L6.5 7.6 L11 5.6 M6.5 7.6 V10"/></g></svg>
<span style="left:271.5px;letter-spacing:0.036px">SearchProducts</span>
<svg class="abs" style="left:369px;top:5px" width="8" height="12" viewBox="0 0 8 12"><path d="M1.5 1.5 L6 6 L1.5 10.5" fill="none" stroke="#a0a0a0" stroke-width="1"/></svg>
<svg class="abs" style="left:382px;top:3px" width="14" height="16" viewBox="0 0 14 16"><g fill="none" stroke="#b180d7" stroke-width="1.1" stroke-linejoin="round"><path d="M7 1.2 L13 4.2 V11.6 L7 14.8 L1 11.6 V4.2 Z M1 4.2 L7 7.4 L13 4.2 M7 7.4 V14.8"/></g></svg>
<span style="left:399.0px;letter-spacing:0.165px">useEffect() callback</span>
<svg class="abs" style="left:520px;top:5px" width="8" height="12" viewBox="0 0 8 12"><path d="M1.5 1.5 L6 6 L1.5 10.5" fill="none" stroke="#a0a0a0" stroke-width="1"/></svg>
<svg class="abs" style="left:532px;top:4px" width="15" height="14" viewBox="0 0 15 14"><g fill="none" stroke="#75beff" stroke-width="1.1"><path d="M3.5 2 H1.7 V12 H3.5 M11.5 2 H13.3 V12 H11.5"/><path d="M4 6.2 L8.5 4.2 L11 5.6 L11 8 L6.5 10 L4 8.6 Z M4 6.2 L6.5 7.6 L11 5.6 M6.5 7.6 V10"/></g></svg>
<span style="left:550.5px;letter-spacing:0.372px">fetchData</span>
</div>
<svg class="abs" style="left:0;top:0" width="1320" height="635" viewBox="0 0 1320 635"><g fill="none" stroke-width="1.2" opacity=".56"><path stroke="#ce9178" d="M1193 57.8h12M1229 59.8h7M1215 61.8h16M1225 63.80000000000001h17M1225 65.80000000000001h23M1217 67.80000000000001h26M1212 69.80000000000001h29M1216 71.80000000000001h33M1220 73.80000000000001h29M1226 125.80000000000001h8M1256 137.8h2M1238 159.8h11M1217 177.8h25M1229 183.8h26M1231 207.8h8M1211 227.8h27M1234 231.8h16M1211 233.8h29M1217 247.8h31M1215 253.8h19M1213 259.8h25M1225 265.8h26M1217 295.8h65M1217 303.8h64M1212 311.8h2M1214 313.8h57M1216 315.8h38M1217 317.8h42M1216 347.8h42M1216 349.8h40M1259 351.8h11M1218 355.8h12M1222 359.8h54M1218 387.8h36M1220 393.8h83"/><path stroke="#b0b0b0" d="M1205 57.8h1M1200 59.8h1M1211 59.8h1M1222 59.8h1M1236 59.8h1M1200 61.8h1M1208 61.8h1M1231 61.8h1M1200 63.80000000000001h1M1218 63.80000000000001h1M1242 63.80000000000001h1M1200 65.80000000000001h1M1208 65.80000000000001h1M1218 65.80000000000001h1M1248 65.80000000000001h1M1243 67.80000000000001h1M1241 69.80000000000001h1M1249 71.80000000000001h1M1249 73.80000000000001h1M1211 77.80000000000001h1M1197 79.80000000000001h1M1205 79.80000000000001h1M1200 81.80000000000001h1M1208 81.80000000000001h1M1206 83.80000000000001h1M1214 83.80000000000001h1M1200 85.80000000000001h1M1208 85.80000000000001h1M1203 87.80000000000001h1M1211 87.80000000000001h1M1203 89.80000000000001h1M1211 89.80000000000001h1M1193 91.80000000000001h1M1216 93.80000000000001h1M1199 95.80000000000001h1M1207 95.80000000000001h1M1200 97.80000000000001h1M1208 97.80000000000001h1M1199 99.80000000000001h1M1207 99.80000000000001h1M1193 101.80000000000001h1M1221 103.80000000000001h1M1207 105.80000000000001h1M1221 105.80000000000001h3M1193 107.80000000000001h1M1215 111.80000000000001h1M1207 113.80000000000001h1M1212 113.80000000000001h3M1209 115.80000000000001h1M1211 115.80000000000001h1M1218 115.80000000000001h1M1226 115.80000000000001h1M1240 115.80000000000001h1M1242 115.80000000000001h1M1255 115.80000000000001h1M1263 115.80000000000001h1M1278 115.80000000000001h1M1287 115.80000000000001h3M1291 115.80000000000001h4M1193 117.80000000000001h1M1214 121.80000000000001h1M1216 121.80000000000001h2M1219 121.80000000000001h2M1222 121.80000000000001h1M1208 123.80000000000001h1M1225 123.80000000000001h3M1213 125.80000000000001h1M1221 125.80000000000001h1M1225 125.80000000000001h1M1234 125.80000000000001h2M1201 127.80000000000001h1M1210 127.80000000000001h1M1223 127.80000000000001h1M1225 127.80000000000001h1M1235 127.80000000000001h1M1243 127.80000000000001h8M1201 129.8h1M1209 129.8h1M1221 129.8h1M1223 129.8h1M1233 129.8h1M1238 129.8h2M1201 131.8h1M1207 131.8h1M1217 131.8h1M1219 131.8h1M1229 131.8h1M1237 131.8h1M1243 131.8h2M1249 131.8h2M1201 133.8h1M1209 133.8h1M1221 133.8h1M1223 133.8h1M1233 133.8h1M1246 133.8h1M1252 133.8h2M1258 133.8h2M1201 135.8h1M1214 135.8h1M1230 135.8h1M1232 135.8h1M1242 135.8h1M1246 135.8h5M1201 137.8h1M1218 137.8h1M1238 137.8h1M1240 137.8h1M1250 137.8h1M1254 137.8h2M1258 137.8h1M1201 139.8h1M1217 139.8h1M1236 139.8h1M1238 139.8h1M1248 139.8h1M1252 139.8h5M1201 141.8h1M1214 141.8h1M1230 141.8h1M1232 141.8h1M1242 141.8h1M1246 141.8h2M1259 141.8h1M1201 143.8h1M1213 143.8h1M1229 143.8h1M1231 143.8h1M1241 143.8h1M1243 143.8h2M1217 145.8h1M1220 145.8h1M1204 149.8h3M1208 149.8h2M1211 149.8h1M1213 151.8h1M1221 151.8h2M1224 151.8h2M1227 151.8h1M1202 153.8h1M1214 153.8h1M1216 153.8h1M1209 155.8h1M1214 155.8h2M1205 157.8h1M1217 159.8h1M1223 159.8h1M1237 159.8h1M1249 159.8h1M1251 159.8h3M1255 159.8h1M1263 159.8h1M1277 159.8h2M1280 159.8h4M1210 161.8h1M1214 161.8h1M1223 161.8h1M1228 161.8h1M1233 161.8h1M1240 161.8h1M1206 163.8h1M1215 163.8h2M1221 163.8h2M1231 163.8h3M1239 163.8h1M1241 163.8h1M1215 165.8h1M1225 165.8h1M1230 165.8h1M1235 165.8h1M1216 167.8h1M1225 167.8h1M1230 167.8h2M1215 169.8h1M1219 169.8h1M1226 169.8h1M1237 169.8h2M1219 171.8h1M1223 171.8h1M1228 171.8h1M1241 171.8h2M1216 173.8h1M1225 173.8h1M1230 173.8h1M1235 173.8h1M1245 173.8h2M1248 173.8h4M1203 175.8h1M1210 175.8h1M1210 177.8h1M1216 177.8h1M1242 177.8h2M1203 179.8h1M1201 181.8h1M1209 181.8h1M1215 181.8h1M1220 181.8h1M1222 181.8h1M1211 183.8h1M1217 183.8h1M1226 183.8h2M1255 183.8h2M1201 185.8h1M1211 185.8h1M1213 187.8h1M1219 187.8h2M1201 189.8h1M1199 191.8h1M1197 193.8h2M1206 197.8h3M1195 199.8h2M1198 199.8h1M1210 199.8h3M1220 203.8h1M1228 203.8h1M1233 203.8h1M1238 203.8h1M1252 203.8h1M1260 203.8h1M1262 203.8h2M1265 203.8h1M1215 207.8h1M1217 207.8h1M1226 207.8h1M1228 207.8h2M1240 207.8h2M1245 207.8h1M1248 207.8h1M1254 207.8h1M1210 213.8h1M1212 213.8h1M1203 215.8h1M1217 215.8h1M1223 215.8h1M1229 215.8h1M1240 215.8h1M1204 217.8h1M1218 217.8h1M1224 217.8h1M1231 217.8h1M1242 217.8h1M1210 219.8h1M1225 219.8h1M1238 219.8h1M1241 219.8h1M1197 221.8h2M1201 225.8h1M1206 227.8h1M1210 227.8h1M1238 227.8h1M1246 227.8h2M1213 231.8h1M1219 231.8h1M1233 231.8h1M1250 231.8h1M1252 231.8h3M1262 231.8h1M1264 231.8h4M1206 233.8h1M1210 233.8h1M1240 233.8h1M1250 233.8h2M1202 237.8h1M1211 237.8h2M1217 237.8h2M1227 237.8h3M1235 237.8h1M1237 237.8h1M1211 239.8h1M1221 239.8h1M1226 239.8h1M1231 239.8h1M1212 241.8h1M1221 241.8h1M1226 241.8h2M1204 245.8h1M1213 245.8h1M1218 245.8h1M1223 245.8h1M1228 245.8h1M1238 245.8h1M1241 245.8h1M1243 245.8h1M1208 247.8h1M1216 247.8h1M1248 247.8h2M1214 249.8h1M1223 249.8h1M1228 249.8h1M1233 249.8h1M1243 249.8h2M1246 249.8h4M1201 251.8h1M1208 251.8h1M1208 253.8h1M1214 253.8h1M1234 253.8h2M1201 255.8h1M1199 257.8h1M1206 257.8h1M1206 259.8h1M1212 259.8h1M1238 259.8h2M1199 261.8h1M1197 263.8h1M1205 263.8h1M1211 263.8h1M1216 263.8h1M1218 263.8h1M1207 265.8h1M1213 265.8h1M1222 265.8h2M1251 265.8h2M1197 267.8h1M1207 267.8h1M1209 269.8h1M1215 269.8h2M1197 271.8h1M1195 273.8h2M1216 279.8h1M1222 279.8h1M1227 279.8h1M1236 279.8h1M1244 279.8h1M1261 279.8h2M1220 283.8h1M1234 283.8h1M1251 283.8h1M1221 285.8h1M1242 285.8h1M1259 285.8h1M1217 287.8h1M1227 287.8h1M1233 287.8h1M1253 287.8h1M1273 287.8h2M1202 289.8h1M1206 289.8h1M1222 289.8h1M1226 289.8h1M1198 293.8h1M1206 293.8h1M1208 293.8h1M1204 295.8h1M1216 295.8h1M1282 295.8h1M1290 295.8h5M1296 295.8h2M1195 297.8h1M1198 301.8h1M1204 301.8h1M1206 301.8h1M1204 303.8h1M1216 303.8h1M1281 303.8h2M1288 303.8h3M1292 303.8h2M1195 305.8h1M1202 309.8h1M1197 311.8h1M1211 311.8h1M1214 311.8h1M1199 313.8h1M1213 313.8h1M1271 313.8h1M1201 315.8h1M1215 315.8h1M1254 315.8h1M1203 317.8h1M1216 317.8h1M1259 317.8h1M1273 317.8h2M1277 317.8h1M1203 319.8h2M1208 319.8h1M1203 321.8h1M1206 323.8h2M1219 323.8h1M1224 323.8h1M1238 323.8h2M1241 323.8h3M1207 325.8h3M1212 325.8h1M1217 325.8h1M1219 325.8h2M1240 325.8h1M1243 325.8h1M1259 325.8h1M1264 325.8h2M1193 327.8h2M1193 329.8h1M1210 331.8h2M1227 331.8h1M1232 331.8h1M1245 331.8h1M1211 333.8h3M1226 333.8h1M1234 333.8h1M1236 333.8h2M1215 335.8h2M1222 335.8h1M1235 335.8h1M1240 335.8h1M1245 335.8h1M1252 335.8h1M1265 335.8h1M1270 335.8h1M1277 335.8h2M1292 335.8h1M1195 337.8h1M1193 339.8h2M1203 341.8h2M1208 341.8h1M1201 343.8h2M1206 343.8h1M1201 347.8h1M1215 347.8h1M1258 347.8h1M1203 349.8h1M1215 349.8h1M1256 349.8h1M1213 351.8h1M1222 351.8h1M1229 351.8h1M1243 351.8h1M1258 351.8h1M1270 351.8h2M1283 351.8h3M1290 351.8h1M1203 353.8h2M1206 353.8h1M1203 355.8h1M1217 355.8h1M1230 355.8h1M1205 357.8h1M1221 357.8h1M1229 357.8h1M1233 357.8h1M1235 357.8h1M1207 359.8h1M1221 359.8h1M1276 359.8h1M1209 361.8h1M1225 361.8h1M1229 361.8h2M1238 361.8h1M1240 361.8h2M1243 361.8h1M1213 363.8h1M1218 365.8h2M1227 365.8h1M1230 365.8h1M1220 367.8h2M1229 367.8h1M1235 367.8h1M1220 369.8h2M1229 369.8h1M1235 369.8h1M1223 371.8h2M1232 371.8h1M1241 371.8h1M1220 373.8h2M1229 373.8h1M1235 373.8h1M1213 375.8h2M1211 377.8h3M1209 379.8h2M1214 379.8h1M1205 381.8h1M1207 381.8h1M1209 381.8h1M1211 381.8h1M1213 381.8h1M1247 381.8h3M1251 381.8h1M1253 381.8h2M1203 383.8h2M1208 383.8h1M1203 387.8h1M1217 387.8h1M1254 387.8h1M1205 389.8h1M1211 389.8h1M1216 389.8h2M1225 389.8h1M1231 389.8h1M1236 389.8h1M1245 389.8h1M1253 389.8h1M1270 389.8h1M1272 389.8h2M1275 389.8h1M1277 389.8h1M1280 389.8h1M1282 389.8h2M1285 389.8h1M1207 391.8h1M1218 391.8h2M1222 391.8h1M1225 391.8h1M1234 391.8h4M1239 391.8h2M1256 391.8h1M1259 391.8h1M1262 391.8h2M1218 393.8h2M1209 395.8h1M1211 395.8h1M1213 395.8h1M1209 397.8h2M1217 397.8h1M1207 399.8h3M1206 401.8h2M1211 401.8h1M1204 403.8h2M1209 403.8h1M1202 405.8h2M1207 405.8h1M1201 407.8h1M1217 407.8h2M1200 409.8h2M1205 409.8h1M1198 411.8h2M1196 413.8h2M1222 417.8h1"/><path stroke="#c586c0" d="M1193 59.8h6M1224 59.8h4M1193 61.8h6M1210 61.8h4M1193 63.80000000000001h6M1220 63.80000000000001h4M1193 65.80000000000001h6M1220 65.80000000000001h4M1193 67.80000000000001h6M1212 67.80000000000001h4M1193 69.80000000000001h6M1207 69.80000000000001h4M1193 71.80000000000001h6M1211 71.80000000000001h4M1193 73.80000000000001h6M1215 73.80000000000001h4M1199 153.8h2M1201 157.8h3M1225 159.8h5M1203 163.8h2M1205 175.8h4M1203 181.8h5M1203 185.8h7M1197 225.8h3M1221 231.8h5M1199 237.8h2M1201 245.8h2M1203 251.8h4M1201 257.8h4M1199 263.8h5M1199 267.8h7M1195 293.8h2M1197 295.8h6M1195 301.8h2M1197 303.8h6M1195 309.8h6M1212 389.8h4M1193 417.8h6M1200 417.8h7"/><path stroke="#6fc3ee" d="M1202 59.8h9M1213 59.8h8M1202 61.8h5M1202 63.80000000000001h15M1202 65.80000000000001h6M1210 65.80000000000001h7M1195 79.80000000000001h2M1195 81.80000000000001h5M1195 83.80000000000001h11M1195 85.80000000000001h5M1195 87.80000000000001h8M1195 89.80000000000001h8M1195 95.80000000000001h4M1195 97.80000000000001h5M1195 99.80000000000001h4M1195 113.80000000000001h12M1195 115.80000000000001h14M1213 115.80000000000001h5M1228 115.80000000000001h12M1244 115.80000000000001h11M1265 115.80000000000001h13M1201 123.80000000000001h6M1201 125.80000000000001h11M1215 125.80000000000001h6M1202 127.80000000000001h8M1212 127.80000000000001h11M1227 127.80000000000001h8M1202 129.8h7M1211 129.8h10M1202 131.8h5M1209 131.8h8M1221 131.8h8M1202 133.8h7M1211 133.8h10M1225 133.8h8M1202 135.8h11M1216 135.8h14M1234 135.8h8M1202 137.8h15M1220 137.8h18M1242 137.8h8M1202 139.8h14M1219 139.8h17M1240 139.8h8M1202 141.8h11M1216 141.8h14M1234 141.8h8M1248 141.8h11M1202 143.8h11M1215 143.8h14M1201 145.8h15M1203 151.8h9M1203 153.8h11M1209 159.8h8M1257 159.8h6M1265 159.8h11M1203 161.8h7M1215 161.8h8M1224 161.8h4M1229 161.8h4M1207 163.8h8M1217 163.8h4M1223 163.8h7M1211 165.8h3M1217 165.8h8M1226 165.8h4M1231 165.8h4M1217 167.8h8M1226 167.8h4M1216 169.8h3M1220 169.8h6M1227 169.8h10M1220 171.8h3M1224 171.8h4M1229 171.8h12M1217 173.8h8M1226 173.8h4M1231 173.8h4M1236 173.8h8M1205 177.8h5M1210 181.8h5M1212 183.8h5M1218 183.8h7M1199 199.8h11M1201 203.8h18M1229 203.8h4M1240 203.8h12M1203 207.8h11M1219 207.8h6M1203 213.8h6M1199 215.8h4M1205 215.8h11M1219 215.8h4M1224 215.8h4M1199 217.8h5M1206 217.8h11M1220 217.8h4M1225 217.8h5M1199 219.8h11M1212 219.8h12M1227 219.8h10M1199 227.8h7M1240 227.8h6M1205 231.8h8M1256 231.8h6M1199 233.8h7M1242 233.8h8M1203 237.8h8M1213 237.8h4M1219 237.8h7M1207 239.8h3M1213 239.8h8M1222 239.8h4M1227 239.8h4M1213 241.8h8M1222 241.8h4M1205 245.8h8M1214 245.8h4M1219 245.8h4M1224 245.8h4M1229 245.8h8M1203 247.8h5M1215 249.8h8M1224 249.8h4M1229 249.8h4M1234 249.8h8M1203 253.8h5M1201 259.8h5M1206 263.8h5M1208 265.8h5M1214 265.8h7M1201 279.8h14M1228 279.8h8M1237 279.8h6M1246 279.8h15M1201 283.8h18M1222 283.8h11M1236 283.8h15M1201 285.8h19M1223 285.8h18M1244 285.8h15M1201 287.8h15M1219 287.8h8M1234 287.8h19M1255 287.8h18M1195 289.8h7M1207 289.8h15M1199 293.8h7M1199 301.8h5M1283 303.8h5M1266 317.8h7M1211 321.8h4M1195 323.8h11M1208 323.8h11M1220 323.8h4M1225 323.8h12M1195 325.8h12M1210 325.8h2M1241 325.8h2M1245 325.8h14M1260 325.8h4M1195 331.8h15M1212 331.8h15M1228 331.8h4M1233 331.8h12M1195 333.8h16M1214 333.8h12M1218 335.8h4M1224 335.8h11M1236 335.8h4M1241 335.8h4M1247 335.8h5M1254 335.8h11M1266 335.8h4M1271 335.8h5M1280 335.8h12M1214 351.8h8M1223 351.8h6M1231 351.8h7M1239 351.8h3M1272 351.8h11M1206 357.8h15M1222 357.8h6M1210 361.8h15M1231 361.8h7M1215 365.8h3M1220 365.8h7M1228 365.8h2M1215 367.8h5M1222 367.8h7M1230 367.8h5M1215 369.8h5M1222 369.8h7M1230 369.8h5M1215 371.8h8M1225 371.8h7M1233 371.8h8M1215 373.8h5M1222 373.8h7M1230 373.8h5M1217 381.8h8M1226 381.8h5M1232 381.8h3M1236 381.8h4M1241 381.8h6M1219 389.8h6M1237 389.8h8M1246 389.8h6M1255 389.8h15M1276 389.8h1M1279 389.8h1M1215 391.8h3M1220 391.8h1M1227 391.8h7M1257 391.8h1M1212 395.8h1"/><path stroke="#4ec9b0" d="M1200 67.80000000000001h11M1200 69.80000000000001h6M1200 71.80000000000001h10M1200 73.80000000000001h14M1203 77.80000000000001h7M1199 79.80000000000001h6M1202 81.80000000000001h6M1208 83.80000000000001h6M1202 85.80000000000001h6M1205 87.80000000000001h6M1205 89.80000000000001h6M1203 93.80000000000001h12M1201 95.80000000000001h6M1202 97.80000000000001h6M1201 99.80000000000001h6M1203 103.80000000000001h17M1195 105.80000000000001h12M1209 105.80000000000001h12M1203 111.80000000000001h11M1209 113.80000000000001h3M1220 115.80000000000001h6M1257 115.80000000000001h6M1280 115.80000000000001h6M1199 121.80000000000001h14M1236 127.80000000000001h7M1230 131.8h6M1234 133.8h11M1243 135.8h3M1251 137.8h3M1249 139.8h3M1243 141.8h3M1219 159.8h3M1217 181.8h3M1235 203.8h3M1254 203.8h6M1215 231.8h3M1213 263.8h3M1218 279.8h4M1283 295.8h7M1260 317.8h5M1204 321.8h6M1214 325.8h3M1194 329.8h10M1228 333.8h6M1205 351.8h7M1214 363.8h11M1214 381.8h2M1206 389.8h5M1227 389.8h4M1202 407.8h14M1208 417.8h14"/><path stroke="#569cd6" d="M1193 77.80000000000001h9M1193 93.80000000000001h9M1193 103.80000000000001h9M1193 111.80000000000001h9M1193 121.80000000000001h5M1195 123.80000000000001h5M1195 125.80000000000001h5M1195 127.80000000000001h5M1195 129.8h5M1234 129.8h4M1195 131.8h5M1239 131.8h4M1245 131.8h4M1195 133.8h5M1248 133.8h4M1254 133.8h4M1195 135.8h5M1195 137.8h5M1195 139.8h5M1195 141.8h5M1195 143.8h5M1195 145.8h5M1197 151.8h5M1215 151.8h5M1210 155.8h4M1203 159.8h5M1235 163.8h4M1205 165.8h5M1214 187.8h5M1195 203.8h5M1222 203.8h5M1197 207.8h5M1250 207.8h4M1197 213.8h5M1231 215.8h9M1233 217.8h9M1199 231.8h5M1231 237.8h4M1201 239.8h5M1210 269.8h5M1195 279.8h5M1195 283.8h5M1195 285.8h5M1195 287.8h5M1205 295.8h1M1207 295.8h9M1295 295.8h1M1205 303.8h1M1207 303.8h9M1291 303.8h1M1198 311.8h3M1202 311.8h9M1200 313.8h3M1204 313.8h9M1202 315.8h3M1206 315.8h9M1204 317.8h2M1207 317.8h9M1275 317.8h2M1205 319.8h3M1205 341.8h3M1203 343.8h3M1202 347.8h3M1206 347.8h9M1204 349.8h1M1206 349.8h9M1244 351.8h4M1249 351.8h9M1286 351.8h4M1205 353.8h1M1204 355.8h3M1208 355.8h9M1208 359.8h3M1212 359.8h9M1211 379.8h3M1212 381.8h1M1250 381.8h1M1205 383.8h3M1204 387.8h3M1208 387.8h9M1208 391.8h6M1209 393.8h9M1211 397.8h6M1208 401.8h3M1206 403.8h3M1204 405.8h3M1202 409.8h3"/><path stroke="#dcdcaa" d="M1210 123.80000000000001h15M1222 125.80000000000001h3M1225 129.8h8M1233 143.8h8M1195 149.8h9M1201 155.8h8M1231 159.8h6M1211 161.8h3M1205 167.8h11M1205 169.8h10M1205 171.8h14M1205 173.8h11M1211 177.8h5M1203 183.8h8M1203 187.8h10M1197 197.8h9M1207 227.8h3M1227 231.8h6M1207 233.8h3M1201 241.8h11M1209 247.8h7M1203 249.8h11M1209 253.8h5M1207 259.8h5M1199 265.8h8M1199 269.8h10M1223 279.8h4M1228 287.8h5M1203 289.8h3M1222 325.8h18M1197 335.8h18M1226 361.8h3M1232 389.8h4M1242 391.8h14"/><path stroke="#b5cea8" d="M1242 143.8h1M1219 145.8h1M1234 161.8h6M1243 207.8h1M1247 207.8h1M1240 219.8h1M1240 245.8h1M1223 289.8h3M1231 357.8h1M1224 391.8h1M1261 391.8h1"/><path stroke="#6a9955" d="M1197 205.8h69M1197 211.8h32M1243 219.8h34"/></g></svg>
<div class="abs" style="left:1187px;top:103px;width:2px;height:4px;background:#f14c4c"></div>
<div class="abs" style="left:1187px;top:143px;width:2px;height:4px;background:#0f7fd8"></div>
<div class="abs" style="left:1187px;top:157px;width:2px;height:2px;background:#f14c4c"></div>
<div class="abs" style="left:1187px;top:161px;width:2px;height:2px;background:#0f7fd8"></div>
<div class="abs" style="left:1187px;top:163px;width:2px;height:2px;background:#f14c4c"></div>
<div class="abs" style="left:1187px;top:171px;width:2px;height:2px;background:#f14c4c"></div>
<div class="abs" style="left:1187px;top:173px;width:2px;height:2px;background:#0f7fd8"></div>
<div class="abs" style="left:1187px;top:175px;width:2px;height:2px;background:#f14c4c"></div>
<div class="abs" style="left:1187px;top:197px;width:2px;height:2px;background:#0f7fd8"></div>
<div class="abs" style="left:1187px;top:203px;width:2px;height:20px;background:#0f7fd8"></div>
<div class="abs" style="left:1187px;top:223px;width:2px;height:8px;background:#2ea043"></div>
<div class="abs" style="left:1187px;top:235px;width:2px;height:2px;background:#2ea043"></div>
<div class="abs" style="left:1187px;top:239px;width:2px;height:2px;background:#0f7fd8"></div>
<div class="abs" style="left:1187px;top:241px;width:2px;height:2px;background:#f14c4c"></div>
<div class="abs" style="left:1187px;top:243px;width:2px;height:28px;background:#0f7fd8"></div>
<div class="abs" style="left:1187px;top:271px;width:2px;height:2px;background:#f14c4c"></div>
<div class="abs" style="left:1187px;top:275px;width:2px;height:16px;background:#2ea043"></div>
<div class="abs" style="left:1187px;top:295px;width:2px;height:2px;background:#0f7fd8"></div>
<div class="abs" style="left:1187px;top:303px;width:2px;height:2px;background:#0f7fd8"></div>
<div class="abs" style="left:1187px;top:321px;width:2px;height:20px;background:#0f7fd8"></div>
<div class="abs" style="left:1187px;top:357px;width:2px;height:2px;background:#0f7fd8"></div>
<div class="abs" style="left:1187px;top:361px;width:2px;height:2px;background:#0f7fd8"></div>
<div class="abs" style="left:1187px;top:381px;width:2px;height:20px;background:#0f7fd8"></div>
<div class="abs" style="left:1187px;top:405px;width:2px;height:2px;background:#f14c4c"></div>
<div class="abs" style="left:1305px;top:57px;width:14px;height:578px;border-left:1px solid #101010;border-top:1px solid #101010"></div>
<div class="abs" style="left:1306px;top:121px;width:4px;height:6px;background:#a85a6e"></div>
<div class="abs" style="left:1306px;top:127px;width:4px;height:1px;background:#0f5a96"></div>
<div class="abs" style="left:1306px;top:175px;width:4px;height:6px;background:#0f5a96"></div>
<div class="abs" style="left:1306px;top:193px;width:4px;height:5px;background:#a63c3c"></div>
<div class="abs" style="left:1306px;top:201px;width:4px;height:3px;background:#a85a6e"></div>
<div class="abs" style="left:1306px;top:204px;width:4px;height:3px;background:#a63c3c"></div>
<div class="abs" style="left:1306px;top:212px;width:4px;height:4px;background:#a63c3c"></div>
<div class="abs" style="left:1306px;top:216px;width:4px;height:7px;background:#a85a6e"></div>
<div class="abs" style="left:1306px;top:247px;width:4px;height:6px;background:#0f5a96"></div>
<div class="abs" style="left:1306px;top:257px;width:4px;height:27px;background:#0f5a96"></div>
<div class="abs" style="left:1306px;top:284px;width:4px;height:11px;background:#2a7035"></div>
<div class="abs" style="left:1306px;top:299px;width:4px;height:6px;background:#2a7035"></div>
<div class="abs" style="left:1306px;top:305px;width:4px;height:2px;background:#0f5a96"></div>
<div class="abs" style="left:1306px;top:307px;width:4px;height:3px;background:#a85a6e"></div>
<div class="abs" style="left:1306px;top:310px;width:4px;height:3px;background:#a63c3c"></div>
<div class="abs" style="left:1306px;top:313px;width:4px;height:35px;background:#0f5a96"></div>
<div class="abs" style="left:1306px;top:348px;width:4px;height:4px;background:#a85a6e"></div>
<div class="abs" style="left:1306px;top:352px;width:4px;height:2px;background:#a63c3c"></div>
<div class="abs" style="left:1306px;top:355px;width:4px;height:22px;background:#2a7035"></div>
<div class="abs" style="left:1306px;top:380px;width:4px;height:6px;background:#0f5a96"></div>
<div class="abs" style="left:1306px;top:391px;width:4px;height:6px;background:#0f5a96"></div>
<div class="abs" style="left:1306px;top:418px;width:4px;height:27px;background:#0f5a96"></div>
<div class="abs" style="left:1306px;top:465px;width:4px;height:11px;background:#0f5a96"></div>
<div class="abs" style="left:1306px;top:499px;width:4px;height:27px;background:#0f5a96"></div>
<div class="abs" style="left:1306px;top:530px;width:4px;height:6px;background:#a63c3c"></div>
<div class="abs" style="left:1306px;top:198px;width:13px;height:2px;background:#9a9a9a"></div>
</div>
<div class="abs" id="panel">
<span class="ptab" style="left:19.5px;letter-spacing:-0.455px;color:#9d9d9d">PROBLEMS</span>
<span class="ptab" style="left:100.1px;letter-spacing:-0.306px;color:#9d9d9d">OUTPUT</span>
<span class="ptab" style="left:166.5px;letter-spacing:-0.498px;color:#9d9d9d">DEBUG CONSOLE</span>
<span class="ptab" style="left:279.5px;letter-spacing:-0.253px;color:#e7e7e7">TERMINAL</span>
<span class="ptab" style="left:355.5px;letter-spacing:-0.341px;color:#9d9d9d">PORTS</span>
<div class="abs" style="left:278px;top:28px;width:57px;height:1px;background:#0078d4"></div>
<svg class="abs" style="left:1093px;top:11px" width="14" height="13" viewBox="0 0 14 13"><g fill="none" stroke="#ccc" stroke-width="1.1"><rect x="0.5" y="0.5" width="12" height="12" rx="1.2"/><path d="M6.5 0.5 V12.5"/></g></svg>
<span class="abs" style="left:1111.5px;letter-spacing:-0.508px;top:9px;font-size:12px;line-height:16px;color:#ccc">bash</span>
<svg class="abs" style="left:1147px;top:11px" width="14" height="13" viewBox="0 0 14 13"><g fill="none" stroke="#ccc" stroke-width="1.1"><rect x="0.5" y="0.5" width="12" height="12" rx="1.2"/><path d="M6.5 0.5 V12.5"/></g></svg>
<svg class="abs" style="left:1164px;top:14px" width="10" height="6" viewBox="0 0 10 6"><path d="M1 1 L5 5 L9 1" fill="none" stroke="#ccc" stroke-width="1"/></svg>
<svg class="abs" style="left:1186px;top:11px" width="14" height="13" viewBox="0 0 14 13"><g fill="none" stroke="#ccc" stroke-width="1.1"><rect x="0.5" y="0.5" width="12" height="12" rx="1.2"/><path d="M6.5 0.5 V12.5"/></g></svg>
<svg class="abs" style="left:1212px;top:10px" width="12" height="14" viewBox="0 0 12 14"><g fill="none" stroke="#ccc" stroke-width="1.1"><path d="M0.5 3 H11.5 M4 3 V1.2 H8 V3 M1.8 3 L2.3 13.2 H9.7 L10.2 3 M4.4 5 V11.5 M6 5 V11.5 M7.6 5 V11.5"/></g></svg>
<svg class="abs" style="left:1238px;top:16px" width="14" height="3" viewBox="0 0 14 3"><g fill="#d0d0d0"><rect x="0.3" y="0.3" width="2" height="2" rx=".5"/><rect x="5.4" y="0.3" width="2" height="2" rx=".5"/><rect x="10.5" y="0.3" width="2" height="2" rx=".5"/></g></svg>
<svg class="abs" style="left:1264px;top:13px" width="12" height="7" viewBox="0 0 12 7"><path d="M1 6 L6 1 L11 6" fill="none" stroke="#ccc" stroke-width="1.1"/></svg>
<svg class="abs" style="left:1291px;top:12px" width="10" height="10" viewBox="0 0 10 10"><path d="M0.8 0.8 L9.2 9.2 M9.2 0.8 L0.8 9.2" fill="none" stroke="#ccc" stroke-width="1.1"/></svg>
<div class="term" style="top:44px"><span class="tg">enspirit@enspirit-H110M-H</span>:<span class="tb">~/Documents/marketplace_web/marketplace_web</span>$ git status</div>
<div class="term" style="top:61px">On branch development</div>
<div class="term" style="top:78px">Your branch is up to date with &#x27;origin/development&#x27;.</div>
<div class="term" style="top:95px"></div>
<div class="term" style="top:112px">Changes not staged for commit:</div>
<div class="term" style="top:129px">  (use &quot;git add &lt;file&gt;...&quot; to update what will be committed)</div>
<div class="term" style="top:146px">  (use &quot;git restore &lt;file&gt;...&quot; to discard changes in working directory)</div>
<div class="term" style="top:163px">        <span class="tr">modified:   app/components/filters/categories.tsx</span></div>
<div class="term" style="top:180px">        <span class="tr">modified:   app/search-products/page.tsx</span></div>
<div class="term" style="top:197px">        <span class="tr">modified:   package-lock.json</span></div>
<div class="term" style="top:214px">        <span class="tr">modified:   package.json</span></div>
<div class="term" style="top:231px"></div>
<div class="term" style="top:248px">no changes added to commit (use &quot;git add&quot; and/or &quot;git commit -a&quot;)</div>
<div class="term" style="top:265px"><span class="tg">enspirit@enspirit-H110M-H</span>:<span class="tb">~/Documents/marketplace_web/marketplace_web</span>$ git add app/<span style="display:inline-block;width:8px;height:16px;background:#ccc;vertical-align:top;margin-top:1px"></span></div>
<div class="abs" style="left:7px;top:47px;width:8px;height:8px;border-radius:4px;background:#2b88b8"></div>
<div class="abs" style="left:7px;top:268px;width:8px;height:8px;border-radius:4px;border:1px solid #6a6a6a"></div>
<div class="abs" style="left:4px;top:45px;width:1px;height:218px;background:#4a4a4a"></div>
<div class="abs" style="left:1305px;top:43px;width:15px;height:290px;border-left:1px solid #0b0b0b;border-top:1px solid #0b0b0b"></div>
<div class="abs" style="left:1306px;top:43px;width:4px;height:3px;background:#1a85c4"></div>
<div class="abs" style="left:1306px;top:260px;width:4px;height:6px;background:#787878"></div>
<div class="abs" style="left:1306px;top:265px;width:14px;height:68px;background:#434343"></div>
</div>
<div class="abs" id="status">
<div class="abs" style="left:1px;top:0;width:34px;height:22px;background:#0078d4"></div>
<svg class="abs" style="left:13px;top:3.5px" width="11" height="12" viewBox="0 0 11 12"><path d="M1 4.5 L4.5 8 L1 11.5 M10 0.5 L6.5 4 L10 7.5" fill="none" stroke="#fff" stroke-width="1.1"/></svg>
<svg class="abs" style="left:41px;top:2.5px" width="13" height="15" viewBox="0 0 13 15"><g fill="none" stroke="#ccc" stroke-width="1.1"><circle cx="3" cy="2.8" r="1.7"/><circle cx="3" cy="12.2" r="1.7"/><circle cx="10" cy="4.8" r="1.7"/><path d="M3 4.5 V10.5 M10 6.5 C10 9 3 8 3 10.5"/></g></svg>
<span style="left:57.5px;letter-spacing:0.467px">development*</span>
<svg class="abs" style="left:142px;top:3.5px" width="14" height="13" viewBox="0 0 14 13"><g fill="none" stroke="#ccc" stroke-width="1.1"><path d="M1.5 6 A5.5 5 0 0 1 11.5 3.5 M12.5 7 A5.5 5 0 0 1 2.5 9.5"/><path d="M11.8 0.8 V3.8 H8.8 M2.2 12.2 V9.2 H5.2"/></g></svg>
<svg class="abs" style="left:171px;top:3.5px" width="13" height="13" viewBox="0 0 13 13"><g fill="none" stroke="#ccc" stroke-width="1.1"><circle cx="6.5" cy="6.5" r="5.7"/><path d="M4.2 4.2 L8.8 8.8 M8.8 4.2 L4.2 8.8"/></g></svg>
<span style="left:187px">0</span>
<svg class="abs" style="left:197px;top:3.5px" width="14" height="13" viewBox="0 0 14 13"><g fill="none" stroke="#ccc" stroke-width="1.1" stroke-linejoin="round"><path d="M7 1 L13.2 12 H0.8 Z"/><path d="M7 5 V8.5 M7 9.6 V10.8"/></g></svg>
<span style="left:214px">0</span>
<svg class="abs" style="left:238px;top:2.5px" width="13" height="14" viewBox="0 0 13 14"><g fill="none" stroke="#ccc" stroke-width="1"><path d="M3.2 1.5 A6 6 0 0 0 3.2 9.5 M9.8 1.5 A6 6 0 0 1 9.8 9.5 M4.8 3.2 A3.5 3.5 0 0 0 4.8 7.8 M8.2 3.2 A3.5 3.5 0 0 1 8.2 7.8"/><circle cx="6.5" cy="5.5" r="1"/><path d="M6.5 6.5 L3.5 13.5 M6.5 6.5 L9.5 13.5 M4.6 11 H8.4"/></g></svg>
<span style="left:253px">0</span>
<span style="left:1419.0px;letter-spacing:-0.145px">Ln 53, Col 41</span>
<span style="left:1504.0px;letter-spacing:-0.264px">Spaces: 2</span>
<span style="left:1570.0px;letter-spacing:-0.2px">UTF-8</span>
<span style="left:1617.5px;letter-spacing:0.242px">LF</span>
<span style="left:1646px;letter-spacing:2.5px;font-size:12px">{}</span>
<span style="left:1664.5px;letter-spacing:-0.038px">TypeScript JSX</span>
<svg class="abs" style="left:1761px;top:3.5px" width="13" height="13" viewBox="0 0 13 13"><g fill="none" stroke="#ccc" stroke-width="1"><path d="M2.3 9.8 A5.6 5.6 0 1 1 10.7 9.8 M4.2 8 A3 3 0 1 1 8.8 8"/><circle cx="6.5" cy="6" r="1"/><path d="M6.5 7 V12.5"/></g></svg>
<span style="left:1776.0px;letter-spacing:-0.123px">Go Live</span>
<svg class="abs" style="left:1833px;top:2.5px" width="15" height="15" viewBox="0 0 15 15"><g fill="none" stroke="#ccc" stroke-width="1.1"><path d="M9 2.2 A4.3 4.3 0 0 0 2.7 6 V9.5 L1.3 11.5 H11.7 L10.3 9.5 V7.8 M5 11.5 A1.6 1.6 0 0 0 8 11.5"/></g><circle cx="11.3" cy="3.7" r="2.6" fill="#ccc"/></svg>
</div>
<div class="abs" style="left:1861px;top:0;width:1px;height:1055px;background:#404040"></div>
<div class="abs" style="left:0;top:1054px;width:1862px;height:1px;background:#403e3c"></div>
</body></html>
